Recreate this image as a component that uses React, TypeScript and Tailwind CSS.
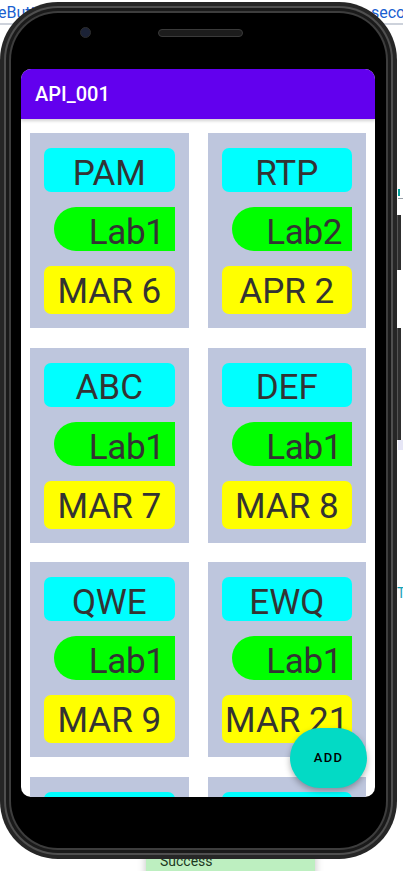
const items = [
  { name: "PAM", lab: "Lab1", date: "MAR 6" },
  { name: "RTP", lab: "Lab2", date: "APR 2" },
  { name: "ABC", lab: "Lab1", date: "MAR 7" },
  { name: "DEF", lab: "Lab1", date: "MAR 8" },
  { name: "QWE", lab: "Lab1", date: "MAR 9" },
  { name: "EWQ", lab: "Lab1", date: "MAR 21" },
  { name: "ZXC", lab: "Lab3", date: "APR 4" },
  { name: "CXZ", lab: "Lab2", date: "APR 9" },
];

type Item = (typeof items)[number];

const LessonCard = ({ item }: { item: Item }) => {
  return (
    <div className="flex h-[195px] flex-col gap-[15px] bg-[#bec6dd] px-[14px] pt-[15px] pb-[14px] text-[35px] leading-none text-[#333]">
      <div className="flex h-[44px] items-center justify-center rounded-[7px] bg-[#00ffff] pt-[6px] whitespace-nowrap">
        {item.name}
      </div>
      <div className="ml-[10px] flex h-[44px] items-center justify-end rounded-l-[22px] bg-[#00ff00] pt-[7px] pr-[10px] tracking-[-0.01em] whitespace-nowrap">
        {item.lab}
      </div>
      <div className="flex h-[48px] items-center justify-center rounded-[7px] bg-[#ffff00] pt-[3px] whitespace-nowrap">
        {item.date}
      </div>
    </div>
  );
};

const Screen = () => {
  return (
    <div className="relative flex h-[728px] w-[354px] flex-col overflow-hidden rounded-[10px] bg-white">
      <header className="relative z-10 flex h-[50px] shrink-0 items-center bg-[#6200ee] px-[14px] text-[20px] font-medium text-white shadow-[0_2px_3px_rgba(0,0,0,0.18)]">
        API_001
      </header>
      <div className="grid grid-cols-2 gap-x-[19px] gap-y-[19.5px] px-[9px] pt-[14px]">
        {items.map((item) => (
          <LessonCard key={item.name} item={item} />
        ))}
      </div>
      <button className="absolute right-[8px] bottom-[9px] flex h-[60px] w-[77px] items-center justify-center rounded-full bg-[#03dac5] text-[13px] font-medium tracking-[0.1em] text-black shadow-[0_3px_6px_rgba(0,0,0,0.3)]">
        ADD
      </button>
    </div>
  );
};

const Phone = () => {
  return (
    <div className="relative z-10 mt-[2px] h-[857px] w-[397px] shrink-0 rounded-[58px] bg-[#262626] p-[4px]">
      <div className="h-full rounded-[54px] bg-[#4f4f4f] p-[2px]">
        <div className="h-full rounded-[52px] bg-[#1a1a1a] p-[3px]">
          <div className="h-full rounded-[49px] bg-[#3d3d3d] p-[2px]">
            <div className="flex h-full flex-col rounded-[47px] bg-black pr-[11px] pl-[10px]">
              <div className="flex h-[56px] shrink-0 items-start">
                <div className="mt-[14px] ml-[59px] h-[11px] w-[11px] rounded-full border border-[#2c2c2c] bg-[#1b2236]" />
                <div className="mt-[16px] ml-[67px] h-[8px] w-[85px] rounded-full border border-[#3a3a3a] bg-[#1c1c1c]" />
              </div>
              <Screen />
            </div>
          </div>
        </div>
      </div>
    </div>
  );
};

export default function App() {
  return (
    <div className="relative h-[871px] w-[403px] overflow-hidden bg-white font-['Roboto',sans-serif]">
      {/* page behind the emulator, mostly hidden by the phone */}
      <span className="absolute top-[1px] left-[-2px] text-[16px] text-[#1a5fd0]">eButton</span>
      <span className="absolute top-[1px] left-[371px] text-[16px] text-[#1a5fd0]">second</span>
      <div className="absolute top-[23px] right-0 left-0 h-[2px] bg-[#cdd2db]" />
      <div className="absolute top-[189px] left-[398px] h-[7px] w-[2px] bg-[#0aa5a0]" />
      <div className="absolute top-[198px] left-[398px] h-px w-[5px] bg-[#9aa0a8]" />
      <div className="absolute top-[440px] left-[398px] h-[10px] w-[5px] bg-[#e6e6f6]" />
      <span className="absolute top-[583px] left-[397px] text-[14px] text-[#17a2b8]">T</span>
      <div className="absolute top-[215px] left-[397px] h-[55px] w-[4px] border-l border-[#555] bg-[#2e2e2e]" />
      <div className="absolute top-[328px] left-[397px] h-[112px] w-[4px] border-l border-[#555] bg-[#2e2e2e]" />
      <div className="absolute top-[836px] left-[146px] h-[50px] w-[169px] bg-[#bdefc0] pt-[15px] pl-[14px] text-[14px] text-[#1d3a1f] shadow-[0_0_8px_rgba(0,0,0,0.25)]">
        Success
      </div>
      <Phone />
    </div>
  );
}
